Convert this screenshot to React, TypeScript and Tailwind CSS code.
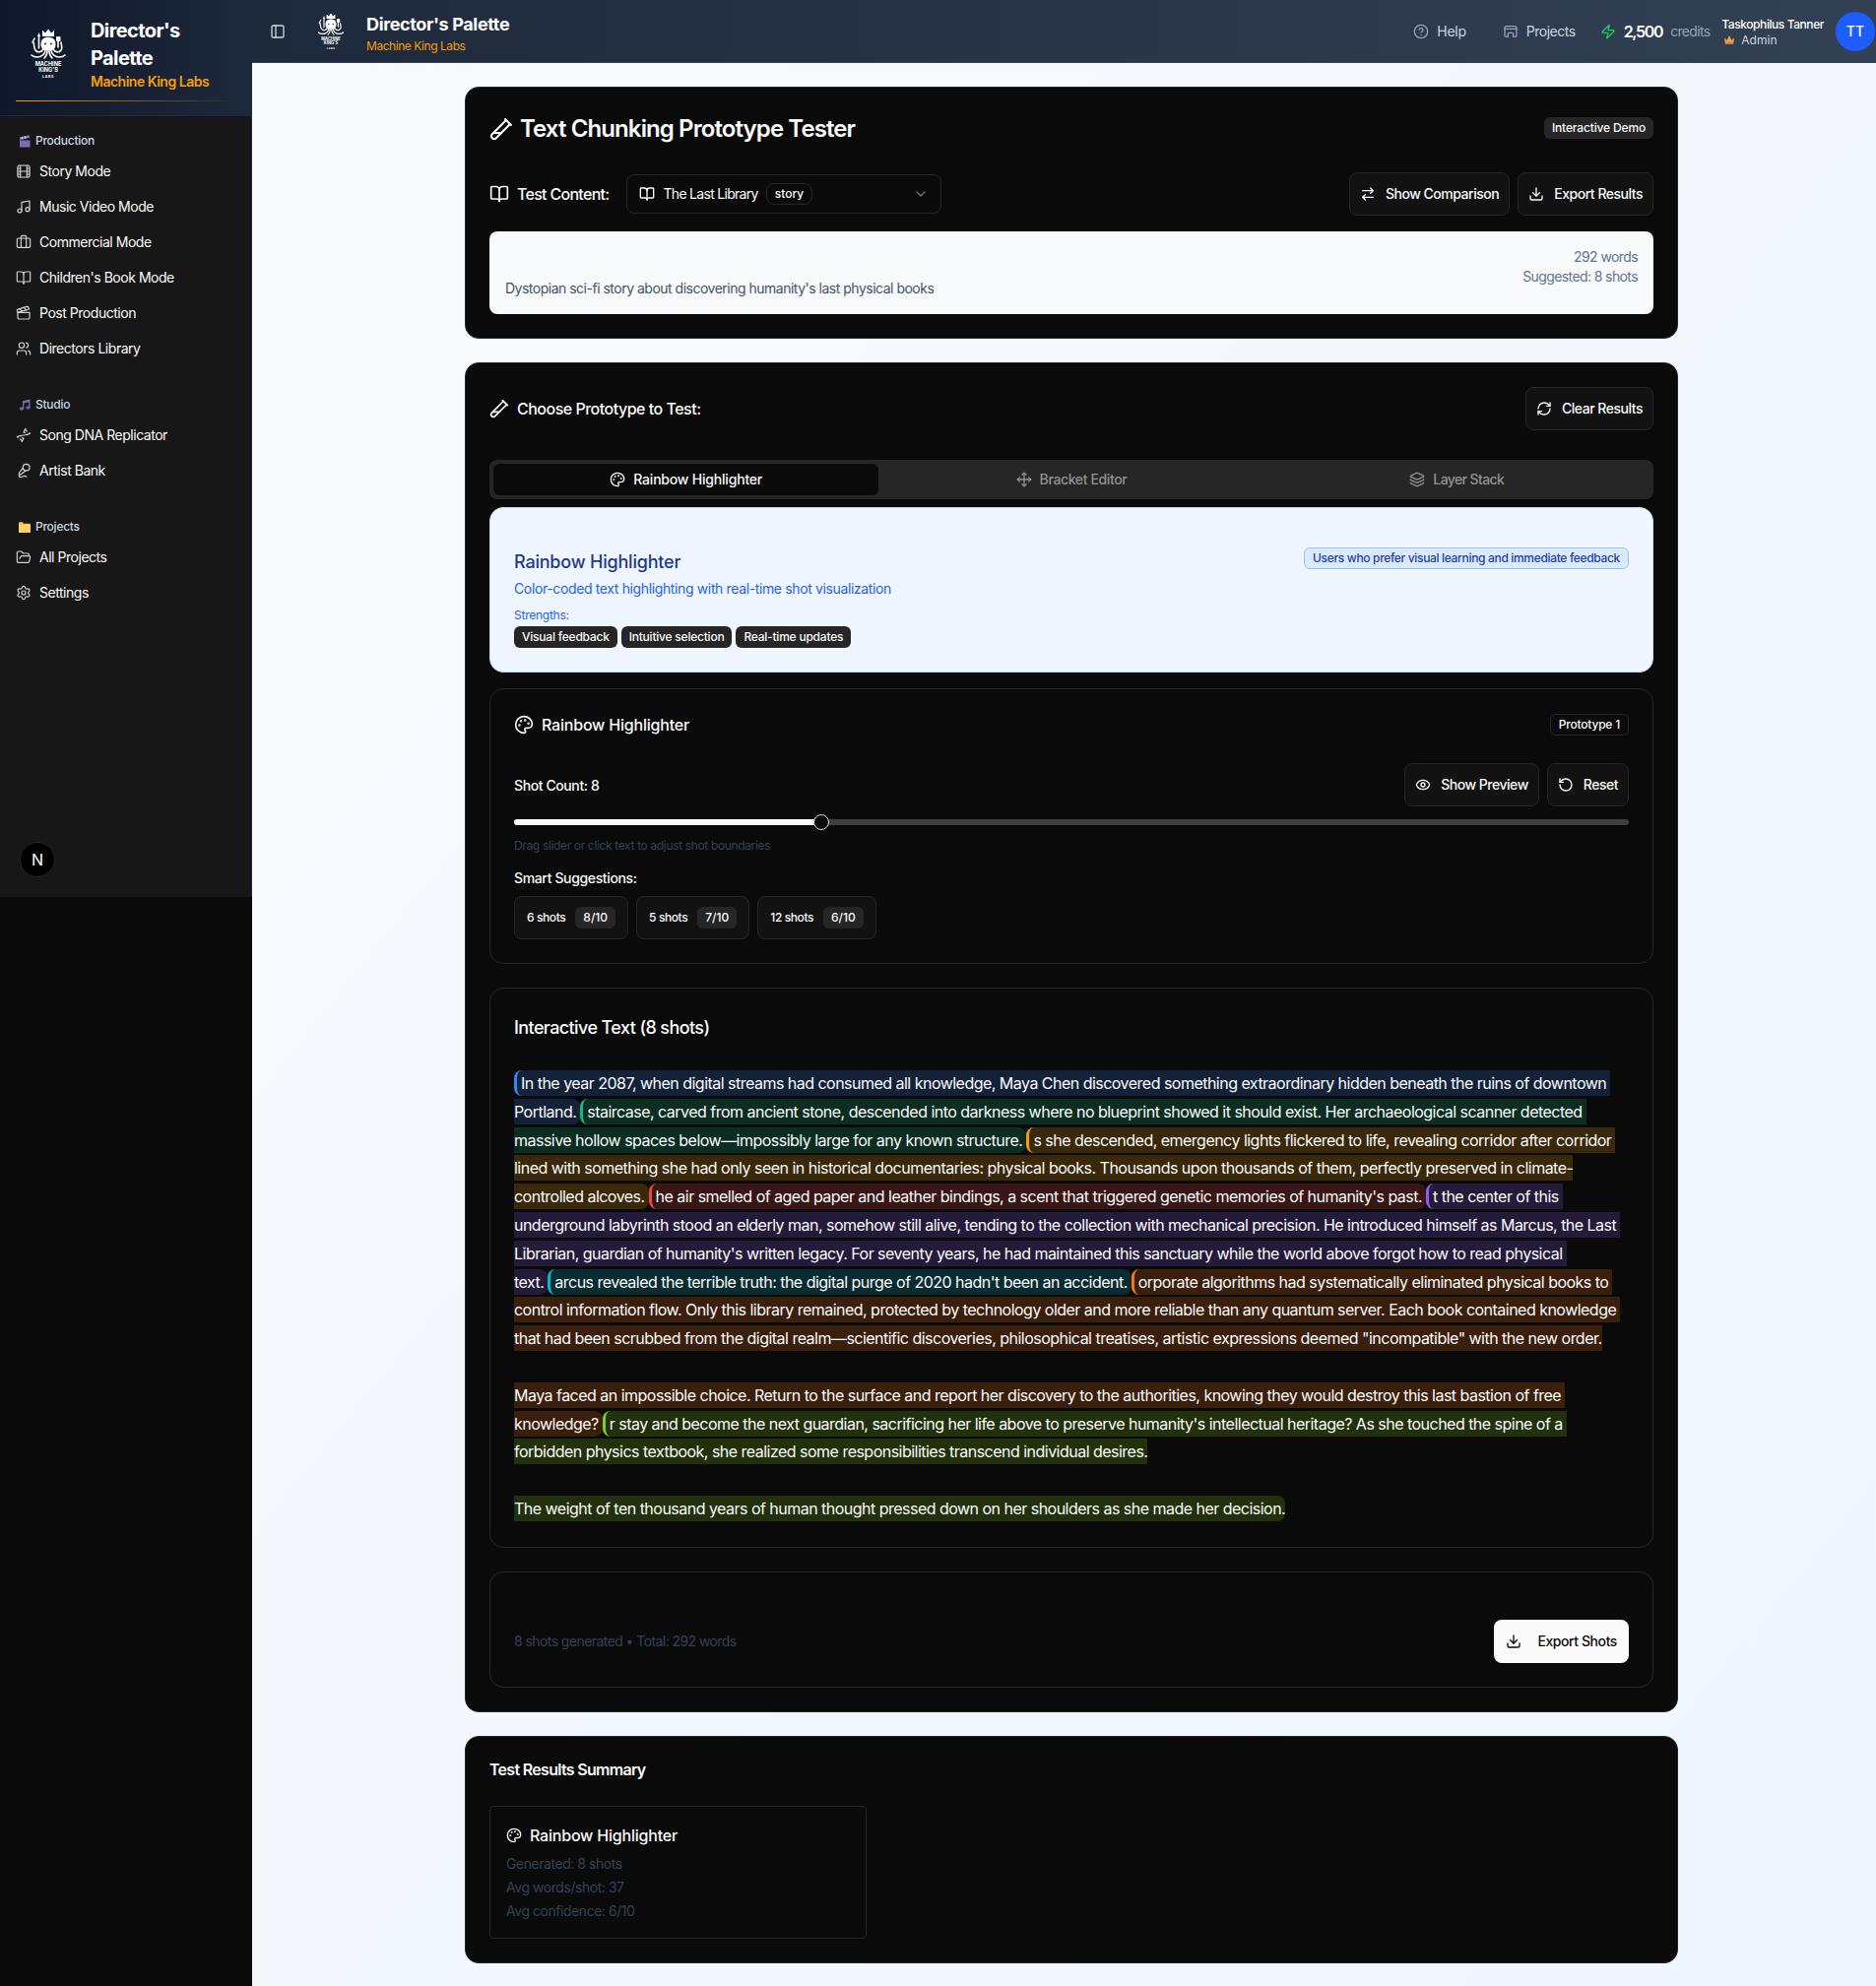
import { ArrowRightLeft, BookOpen, Briefcase, ChevronDown, CircleHelp, Clapperboard, Dna, Download, Eye, Film, FolderOpen, Layers, MicVocal, Move, Music, PanelLeft, Palette, RefreshCw, RotateCcw, Settings, TestTubeDiagonal, Users, Zap } from "lucide-react";
import type { ReactNode } from "react";

function Logo({ className }: { className: string }) {
    return (
        <svg viewBox="0 0 38 50" className={className} fill="none">
            <path d="M13 8V1.800l3 2.700L19 .6l3 3.900 3-2.700V8z" fill="#fff" />
            <path d="M11.500 16c0-5 3-7.200 7.500-7.200S26.500 11 26.500 16c0 3-1.500 5.500-3.500 6.500h-8c-2-1-3.500-3.500-3.500-6.500z" fill="#fff" />
            <circle cx="16" cy="15.500" r="1" fill="#1e293b" />
            <circle cx="22" cy="15.500" r="1" fill="#1e293b" />
            <g stroke="#fff" strokeWidth="1.600" strokeLinecap="round">
                <path d="M14 21c-2 3-6 4-8 1s-1-5-2-8" />
                <path d="M16 23c-1 3-4 6-8 6s-5-1-6-2" />
                <path d="M24 21c2 3 6 4 8 1s0-5 0-8" />
                <path d="M22 23c1 3 4 6 8 6s5-1 6-2" />
                <path d="M18 23c0 3-1 5-3 7" />
                <path d="M20 23c0 3 1 5 3 7" />
                <path d="M9.500 20V8" />
                <path d="M3 14l2-4" />
                <path d="M29 19V12" />
            </g>
            <rect x="27" y="8" width="4.500" height="5" rx="1" fill="#fff" />
            <path d="M9.500 4l1.500 4h-3z" fill="#fff" />
            <text x="19" y="38" textAnchor="middle" fontSize="5.600" fontWeight="700" fill="#fff" fontFamily="Inter, sans-serif">MACHINE</text>
            <text x="19" y="44" textAnchor="middle" fontSize="5.600" fontWeight="700" fill="#fff" fontFamily="Inter, sans-serif">KING'S</text>
            <text x="19" y="49.500" textAnchor="middle" fontSize="3.600" fontWeight="700" fill="#fff" letterSpacing="0.600" fontFamily="Inter, sans-serif">LABS</text>
        </svg>
    );
}

function ClapEmoji() {
    return (
        <svg viewBox="0 0 12 13" className="w-3 h-[13px]">
            <path d="M1 5.500h10.500V12.500H1z" fill="#7c6bb0" />
            <path d="M.8 2.500L10.500 .3l.6 2.400L1.400 5z" fill="#8d7cc4" />
            <path d="M3 2l1 2.400M6 1.400l1 2.400" stroke="#e5e7eb" strokeWidth="1" />
        </svg>
    );
}

function NoteEmoji() {
    return (
        <svg viewBox="0 0 12 12" className="w-3 h-3">
            <path d="M4 2.300L11.500 .5V9h-1.300V3.400L5.300 4.600V10H4z" fill="#7a68b4" />
            <ellipse cx="2.900" cy="10" rx="2.300" ry="1.800" fill="#6f5eaa" />
            <ellipse cx="9.600" cy="9" rx="2.200" ry="1.800" fill="#6f5eaa" />
        </svg>
    );
}

function FolderEmoji() {
    return (
        <svg viewBox="0 0 12 11" className="w-3 h-[11px]">
            <path d="M0 1.500C0 .7.500.3 1 .3h3l1 1.400h6c.6 0 1 .4 1 1V10c0 .6-.4 1-1 1H1c-.6 0-1-.4-1-1z" fill="#fbbf4a" />
            <path d="M0 3h12v7c0 .6-.4 1-1 1H1c-.6 0-1-.4-1-1z" fill="#fdd068" />
        </svg>
    );
}

function CrownEmoji() {
    return (
        <svg viewBox="0 0 12 11" className="w-3 h-[11px]">
            <path d="M1 3.500l2.700 2.300L6 1l2.300 4.800L11 3.500 10 10H2z" fill="#f59e42" />
            <rect x="2" y="8" width="8" height="2" fill="#e0803a" />
            <circle cx="6" cy="9" r=".8" fill="#3b82f6" />
        </svg>
    );
}

function ProjectsIcon() {
    return (
        <svg viewBox="0 0 24 24" className="w-4 h-4" fill="none" stroke="#94a3b8" strokeWidth="2" strokeLinecap="round" strokeLinejoin="round">
            <path d="M7 20H5a2 2 0 0 1-2-2V6.500A2.500 2.500 0 0 1 5.500 4h13A2.500 2.500 0 0 1 21 6.500V18a2 2 0 0 1-2 2h-2" />
            <path d="M3 8h18" />
            <path d="M8 20v-4a2 2 0 0 1 2-2h4a2 2 0 0 1 2 2v4" />
        </svg>
    );
}

const navGroups = [
    {
        label: "Production",
        icon: <ClapEmoji />,
        items: [
            { name: "Story Mode", icon: Film },
            { name: "Music Video Mode", icon: Music },
            { name: "Commercial Mode", icon: Briefcase },
            { name: "Children's Book Mode", icon: BookOpen },
            { name: "Post Production", icon: Clapperboard },
            { name: "Directors Library", icon: Users },
        ],
    },
    {
        label: "Studio",
        icon: <NoteEmoji />,
        items: [
            { name: "Song DNA Replicator", icon: Dna },
            { name: "Artist Bank", icon: MicVocal },
        ],
    },
    {
        label: "Projects",
        icon: <FolderEmoji />,
        items: [
            { name: "All Projects", icon: FolderOpen },
            { name: "Settings", icon: Settings },
        ],
    },
];

function Sidebar() {
    return (
        <aside className="relative w-64 h-[911px] shrink-0 bg-[#171717] border-r border-[#1f2937]">
            <div className="h-[118px] bg-gradient-to-r from-[#0f172a] to-[#1e293b] border-b border-[#1e293b] px-4 pt-[17px]">
                <div className="flex gap-[24px] pl-[14px] pr-2">
                    <Logo className="w-[38px] h-[50px] mt-3 shrink-0" />
                    <div>
                        <div className="text-xl leading-7 font-bold tracking-[-0.6px] text-white">Director's Palette</div>
                        <div className="text-sm leading-5 font-semibold tracking-[-0.5px] text-[#f59e0b]">Machine King Labs</div>
                    </div>
                </div>
                <div className="mt-[9px] h-[1px] w-[220px] bg-gradient-to-r from-[#f59e0b] to-transparent" />
            </div>
            <nav className="px-4 pt-[17px]">
                {navGroups.map((group) => (
                    <div key={group.label} className="mb-[33px]">
                        <div className="flex items-center gap-[5px] h-4 mb-[7px] pl-[3px] text-xs font-medium tracking-[-0.25px] text-[#cbd5e1]">
                            {group.icon}
                            <span>{group.label}</span>
                        </div>
                        <div className="flex flex-col gap-1">
                            {group.items.map((item) => (
                                <a key={item.name} className="flex items-center gap-2 h-8 text-sm tracking-[-0.47px] text-[#fafafa]">
                                    <item.icon size={16} strokeWidth={1.75} className="text-[#d4d4d4] shrink-0" />
                                    <span>{item.name}</span>
                                </a>
                            ))}
                        </div>
                    </div>
                ))}
            </nav>
            <div className="absolute left-5 top-[855px] w-9 h-9 rounded-full bg-black border border-[#262626] flex items-center justify-center text-white text-base font-normal">N</div>
        </aside>
    );
}

function TopBar() {
    return (
        <header className="h-16 flex items-center bg-gradient-to-r from-[#1e293b] to-[#334155] border-b border-[#334155] pl-[18px] pr-[1px]">
            <PanelLeft size={16} className="text-[#cbd5e1]" />
            <Logo className="w-[28px] h-[37px] ml-[32px]" />
            <div className="ml-[22px] mt-[2px]">
                <div className="text-lg leading-7 font-bold tracking-[-0.36px] text-white">Director's Palette</div>
                <div className="text-xs leading-4 tracking-[-0.45px] text-[#f59e0b]">Machine King Labs</div>
            </div>
            <div className="ml-auto flex items-center">
                <CircleHelp size={16} className="text-[#94a3b8]" />
                <span className="ml-2 text-sm tracking-[-0.3px] text-[#cbd5e1]">Help</span>
                <div className="ml-[37px]"><ProjectsIcon /></div>
                <span className="ml-2 text-sm tracking-[-0.48px] text-[#cbd5e1]">Projects</span>
                <Zap size={16} className="ml-[25px] text-[#22c55e]" />
                <span className="ml-2 text-base font-semibold tracking-[-1.3px] text-white">2,500</span>
                <span className="ml-2 text-sm tracking-[-0.7px] text-[#94a3b8]">credits</span>
                <div className="ml-3 mt-[2px]">
                    <div className="text-xs leading-4 font-medium tracking-[-0.43px] text-white">Taskophilus Tanner</div>
                    <div className="flex items-center gap-[6px] pl-[2px] text-xs leading-4 text-[#cbd5e1]"><CrownEmoji />Admin</div>
                </div>
                <div className="ml-3 w-10 h-10 rounded-full bg-[#1d5cff] flex items-center justify-center text-sm font-medium text-white">TT</div>
            </div>
        </header>
    );
}

function OutlineButton({ icon, children }: { icon: ReactNode; children: ReactNode }) {
    return (
        <button className="h-11 px-[10px] flex items-center gap-[10px] rounded-lg bg-[#121212] border border-[#262626] text-sm font-medium tracking-[-0.48px] text-[#fafafa]">
            {icon}
            {children}
        </button>
    );
}

const shots: { border: string; bg: string; text: string }[] = [
    { border: "border-[#3b82f6]", bg: "bg-[#3b82f6]/20", text: "In the year 2087, when digital streams had consumed all knowledge, Maya Chen discovered something extraordinary hidden beneath the ruins of downtown Portland. " },
    { border: "border-[#10b981]", bg: "bg-[#10b981]/20", text: "staircase, carved from ancient stone, descended into darkness where no blueprint showed it should exist. Her archaeological scanner detected massive hollow spaces below—impossibly large for any known structure. " },
    { border: "border-[#f59e0b]", bg: "bg-[#f59e0b]/20", text: "s she descended, emergency lights flickered to life, revealing corridor after corridor lined with something she had only seen in historical documentaries: physical books. Thousands upon thousands of them, perfectly preserved in climate-controlled alcoves. " },
    { border: "border-[#ef4444]", bg: "bg-[#ef4444]/20", text: "he air smelled of aged paper and leather bindings, a scent that triggered genetic memories of humanity's past. " },
    { border: "border-[#8b5cf6]", bg: "bg-[#8b5cf6]/20", text: "t the center of this underground labyrinth stood an elderly man, somehow still alive, tending to the collection with mechanical precision. He introduced himself as Marcus, the Last Librarian, guardian of humanity's written legacy. For seventy years, he had maintained this sanctuary while the world above forgot how to read physical \ntext. " },
    { border: "border-[#06b6d4]", bg: "bg-[#06b6d4]/20", text: "arcus revealed the terrible truth: the digital purge of 2020 hadn't been an accident. " },
    { border: "border-[#f97316]", bg: "bg-[#f97316]/20", text: "orporate algorithms had systematically eliminated physical books to control information flow. Only this library remained, protected by technology older and more reliable than any quantum server. Each book contained knowledge that had been scrubbed from the digital realm—scientific discoveries, philosophical treatises, artistic expressions deemed \"incompatible\" with the new order.\n\nMaya faced an impossible choice. Return to the surface and report her discovery to the authorities, knowing they would destroy this last bastion of free knowledge? " },
    { border: "border-[#84cc16]", bg: "bg-[#84cc16]/20", text: "r stay and become the next guardian, sacrificing her life above to preserve humanity's intellectual heritage? As she touched the spine of a forbidden physics textbook, she realized some responsibilities transcend individual desires.\n\nThe weight of ten thousand years of human thought pressed down on her shoulders as she made her decision." },
];

const suggestions = [
    { label: "6 shots", score: "8/10" },
    { label: "5 shots", score: "7/10" },
    { label: "12 shots", score: "6/10" },
];

export default function App() {
    return (
        <div className="flex min-h-[2017px] bg-[#0a0a0a] [font-family:Inter,sans-serif]">
            <Sidebar />
            <div className="flex-1 min-w-0 flex flex-col bg-gradient-to-br from-[#f8fafc] to-[#eff6ff]">
                <TopBar />
                <main className="w-[1232px] ml-[216px] pt-6 pb-6 flex flex-col gap-6">
                    <section className="rounded-[14px] border border-[#262626] bg-[#0a0a0a] p-6">
                        <div className="flex items-center justify-between h-[34px]">
                            <h1 className="mt-[2px] flex items-center gap-[7px] text-2xl font-semibold tracking-[-0.9px] text-[#fafafa]">
                                <TestTubeDiagonal size={24} />
                                Text Chunking Prototype Tester
                            </h1>
                            <span className="h-[22px] px-2 flex items-center rounded-md bg-[#262626] text-xs font-medium tracking-[-0.15px] text-[#fafafa]">Interactive Demo</span>
                        </div>
                        <div className="mt-7 flex items-center">
                            <BookOpen size={20} className="text-[#fafafa]" />
                            <span className="ml-2 text-base font-medium tracking-[-0.7px] text-[#fafafa]">Test Content:</span>
                            <div className="ml-[18px] w-80 h-10 px-3 flex items-center rounded-lg border border-[#262626] text-sm text-[#fafafa]">
                                <BookOpen size={16} />
                                <span className="ml-2 tracking-[-0.7px]">The Last Library</span>
                                <span className="ml-2 h-[22px] px-2 flex items-center rounded-lg border border-[#262626] text-xs font-medium">story</span>
                                <ChevronDown size={16} className="ml-auto text-[#737373]" />
                            </div>
                            <div className="ml-auto flex gap-2">
                                <OutlineButton icon={<ArrowRightLeft size={16} />}>Show Comparison</OutlineButton>
                                <OutlineButton icon={<Download size={16} />}>Export Results</OutlineButton>
                            </div>
                        </div>
                        <div className="mt-4 h-[84px] rounded-lg bg-[#f8fafc] p-4 flex justify-between text-sm text-[#475569]">
                            <p className="pt-8 tracking-[-0.5px]">Dystopian sci-fi story about discovering humanity's last physical books</p>
                            <div className="text-right text-[#64748b] tracking-[-0.6px]">
                                <div>292 words</div>
                                <div>Suggested: 8 shots</div>
                            </div>
                        </div>
                    </section>

                    <section className="rounded-[14px] border border-[#262626] bg-[#0a0a0a] p-6">
                        <div className="flex items-center justify-between">
                            <h2 className="flex items-center gap-2 text-base font-medium tracking-[-0.5px] text-[#fafafa]">
                                <TestTubeDiagonal size={20} />
                                Choose Prototype to Test:
                            </h2>
                            <OutlineButton icon={<RefreshCw size={16} />}>Clear Results</OutlineButton>
                        </div>

                        <div className="mt-[30px] h-10 p-1 grid grid-cols-3 rounded-lg bg-[#262626] text-sm font-medium">
                            <div className="flex items-center justify-center gap-2 rounded-md bg-[#0a0a0a] tracking-[-0.2px] text-[#fafafa]"><Palette size={16} />Rainbow Highlighter</div>
                            <div className="flex items-center justify-center gap-2 tracking-[-0.37px] text-[#929292]"><Move size={16} />Bracket Editor</div>
                            <div className="flex items-center justify-center gap-2 tracking-[-0.6px] text-[#929292]"><Layers size={16} />Layer Stack</div>
                        </div>

                        <div className="mt-2 h-[168px] rounded-[14px] border border-[#bfdbfe] bg-[#eff6ff] px-6 pt-10 flex items-start justify-between">
                            <div>
                                <h3 className="mt-[1px] text-lg leading-7 font-medium tracking-[-0.2px] text-[#1e3a8a]">Rainbow Highlighter</h3>
                                <p className="mt-[3px] text-sm tracking-[-0.37px] text-[#2563eb]">Color-coded text highlighting with real-time shot visualization</p>
                                <p className="mt-[9px] text-xs leading-4 tracking-[-0.25px] text-[#2563eb]">Strengths:</p>
                                <div className="mt-[3px] flex gap-1">
                                    {["Visual feedback", "Intuitive selection", "Real-time updates"].map((s) => (
                                        <span key={s} className="h-[22px] px-2 flex items-center rounded-md bg-[#262626] text-xs font-medium tracking-[-0.22px] text-[#fafafa]">{s}</span>
                                    ))}
                                </div>
                            </div>
                            <span className="h-[22px] px-2 flex items-center rounded-md border border-[#93c5fd] bg-[#dbeafe] text-xs font-medium tracking-[-0.33px] text-[#1e40af]">Users who prefer visual learning and immediate feedback</span>
                        </div>

                        <div className="mt-4 rounded-[14px] border border-[#262626] p-6">
                            <div className="flex items-center justify-between h-[23px]">
                                <h3 className="flex items-center gap-2 text-base font-medium tracking-[-0.2px] text-[#fafafa]"><Palette size={20} />Rainbow Highlighter</h3>
                                <span className="h-[22px] px-2 flex items-center rounded-md border border-[#262626] text-xs font-medium tracking-[-0.2px] text-[#fafafa]">Prototype 1</span>
                            </div>
                            <div className="mt-7 flex items-center justify-between">
                                <span className="mt-[1px] text-sm font-medium tracking-[-0.4px] text-[#fafafa]">Shot Count: 8</span>
                                <div className="flex gap-2">
                                    <OutlineButton icon={<Eye size={16} />}>Show Preview</OutlineButton>
                                    <OutlineButton icon={<RotateCcw size={16} />}>Reset</OutlineButton>
                                </div>
                            </div>
                            <div className="relative mt-[13px] h-[6px] rounded-full bg-[#404040]">
                                <div className="h-full w-[312px] rounded-full bg-[#fafafa]" />
                                <div className="absolute left-[304px] top-[-5px] w-4 h-4 rounded-full border border-[#d4d4d4] bg-[#0a0a0a]" />
                            </div>
                            <p className="mt-[13px] text-xs leading-4 tracking-[-0.35px] text-[#334155]">Drag slider or click text to adjust shot boundaries</p>
                            <p className="mt-[15px] text-sm font-medium tracking-[-0.36px] text-[#fafafa]">Smart Suggestions:</p>
                            <div className="mt-2 flex gap-2">
                                {suggestions.map((s) => (
                                    <button key={s.label} className="h-11 px-3 flex items-center gap-[10px] rounded-lg bg-[#121212] border border-[#262626] text-xs font-medium tracking-[-0.4px] text-[#fafafa]">
                                        {s.label}
                                        <span className="h-[22px] px-2 flex items-center rounded-md bg-[#262626] tracking-normal">{s.score}</span>
                                    </button>
                                ))}
                            </div>
                        </div>

                        <div className="mt-6 rounded-[14px] border border-[#262626] px-6 pt-[26px] pb-6">
                            <h3 className="text-lg leading-7 font-medium tracking-[-0.6px] text-[#fafafa]">Interactive Text (8 shots)</h3>
                            <p className="mt-7 whitespace-pre-wrap text-base leading-[28.8px] tracking-[-0.52px] text-[#fafafa]">
                                {shots.map((s, i) => (
                                    <span key={i} className={`${s.bg} ${s.border} border-l-[3px] rounded-lg pl-[4px] py-[3px]`}>{s.text}</span>
                                ))}
                            </p>
                        </div>

                        <div className="mt-6 rounded-[14px] border border-[#262626] px-6 pt-12 pb-6 flex items-center justify-between">
                            <span className="text-sm tracking-[-0.57px] text-[#334155]">8 shots generated • Total: 292 words</span>
                            <button className="h-11 px-3 flex items-center gap-4 rounded-lg bg-[#fafafa] text-sm font-medium tracking-[-0.42px] text-[#0a0a0a]"><Download size={16} />Export Shots</button>
                        </div>
                    </section>

                    <section className="rounded-[14px] border border-[#262626] bg-[#0a0a0a] px-6 pt-[21px] pb-6">
                        <h2 className="text-base leading-6 font-semibold tracking-[-0.7px] text-[#fafafa]">Test Results Summary</h2>
                        <div className="mt-[25px] grid grid-cols-3 gap-4">
                            <div className="rounded-[4px] border border-[#262626] px-4 pt-[17px] pb-[15px]">
                                <div className="flex items-center gap-2 text-base leading-6 font-medium tracking-[-0.2px] text-[#fafafa]"><Palette size={16} />Rainbow Highlighter</div>
                                <div className="mt-[5px] text-sm leading-6 tracking-[-0.45px] text-[#334155]">
                                    <p>Generated: 8 shots</p>
                                    <p>Avg words/shot: 37</p>
                                    <p>Avg confidence: 6/10</p>
                                </div>
                            </div>
                        </div>
                    </section>
                </main>
            </div>
        </div>
    );
}
